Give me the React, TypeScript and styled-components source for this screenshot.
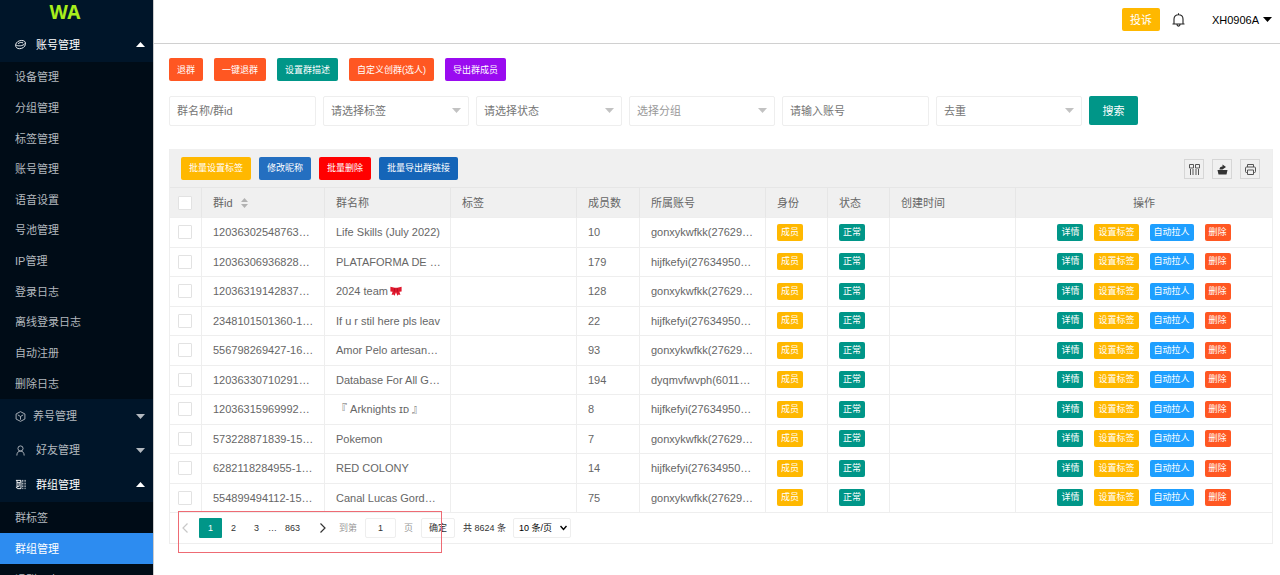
import React from 'react';
import styled, { createGlobalStyle } from 'styled-components';

const GlobalStyle = createGlobalStyle`
  *, *::before, *::after { box-sizing: border-box; }
  body {
    margin: 0;
    background: #fff;
    color: #666;
    font-family: "Liberation Sans", "Noto Sans CJK SC", sans-serif;
    font-size: 11px;
    line-height: 16px;
  }
  button, input, select { font: inherit; margin: 0; }
  ul { list-style: none; margin: 0; padding: 0; }
  a { color: inherit; text-decoration: none; }
`;

const Layout = styled.div`
  display: flex;
  height: 100vh;
  overflow: hidden;
`;

const Sidebar = styled.nav`
  flex: 0 0 153px;
  overflow: hidden;
  background: #001529;
  color: #b3b9bf;
`;

const Logo = styled.div`
  height: 27px;
  padding-right: 23px;
  font-family: "Noto Sans", sans-serif;
  font-size: 19px;
  font-weight: 700;
  line-height: 24px;
  text-align: center;
  color: #a8ee1c;
`;

const GroupButton = styled.button<{ $open?: boolean; $gap: number }>`
  display: flex;
  align-items: center;
  gap: ${p => p.$gap}px;
  width: 100%;
  height: ${p => (p.$open ? 35 : 34)}px;
  padding: 0 8px 0 15px;
  border: 0;
  background: none;
  color: ${p => (p.$open ? '#fff' : '#b3b9bf')};
  text-align: left;
  svg { flex: none; }
  span { flex: 1; }
`;

const SubMenu = styled.ul<{ $height?: number }>`
  display: grid;
  grid-auto-rows: ${p => (p.$height ? '1fr' : '31px')};
  height: ${p => (p.$height ? p.$height + 'px' : 'auto')};
  background: #000c17;
`;

const SubLink = styled.a<{ $active?: boolean }>`
  display: flex;
  align-items: center;
  height: 100%;
  padding-left: 15px;
  background: ${p => (p.$active ? '#2d8cf0' : 'transparent')};
  color: ${p => (p.$active ? '#fff' : '#b3b9bf')};
`;

const Main = styled.div`
  flex: 1;
  min-width: 0;
  border-left: 1px solid #ccc;
`;

const Header = styled.header`
  display: flex;
  align-items: center;
  justify-content: flex-end;
  height: 44px;
  padding: 0 8px 4px 0;
  border-bottom: 1px solid #d0d0d0;
`;

const Button = styled.button<{ $bg: string }>`
  height: 23px;
  padding: 0 8px;
  border: 0;
  border-radius: 2px;
  background: ${p => p.$bg};
  color: #fff;
  font-size: 9px;
  white-space: nowrap;
`;

const ComplainButton = styled(Button)`
  font-size: 11px;
`;

const BellButton = styled.button`
  display: flex;
  margin-left: 12px;
  padding: 0;
  border: 0;
  background: none;
`;

const UserButton = styled.button`
  display: flex;
  align-items: center;
  gap: 4px;
  margin-left: 27px;
  padding: 0;
  border: 0;
  background: none;
  color: #000;
`;

const Content = styled.main`
  padding: 14px 7px 0 15px;
`;

const Actions = styled.div`
  display: flex;
  gap: 11px;
`;

const Filters = styled.form`
  display: flex;
  gap: 7px;
  margin-top: 15px;
`;

const Field = styled.input`
  width: 147px;
  height: 30px;
  padding: 0 7px;
  border: 1px solid #eee;
  border-radius: 2px;
  color: #757575;
  outline: 0;
  &::placeholder { color: #757575; opacity: 1; }
`;

const SelectBox = styled.div`
  position: relative;
  svg {
    position: absolute;
    top: 12px;
    right: 8px;
    pointer-events: none;
  }
`;

const Select = styled.select<{ $light?: boolean }>`
  display: block;
  width: 146px;
  height: 30px;
  padding: 0 7px;
  border: 1px solid #eee;
  border-radius: 2px;
  background: #fff;
  color: ${p => (p.$light ? '#999' : '#757575')};
  appearance: none;
`;

const SearchButton = styled(Button)`
  width: 49px;
  height: 29px;
  font-size: 11px;
`;

const Panel = styled.section`
  margin-top: 23px;
  border: 1px solid #eee;
  border-top: 0;
`;

const Toolbar = styled.div`
  display: flex;
  align-items: center;
  gap: 8px;
  height: 39px;
  padding: 0 12px 0 11px;
  border-bottom: 1px solid #e6e6e6;
  background: #f0f0f0;
`;

const Tools = styled.div`
  display: flex;
  gap: 8px;
  margin-left: auto;
  padding-top: 2px;
`;

const ToolButton = styled.button`
  display: flex;
  align-items: center;
  justify-content: center;
  width: 20px;
  height: 20px;
  padding: 0;
  border: 1px solid #d6d6d6;
  background: none;
`;

const Table = styled.table`
  width: 100%;
  height: 325px;
  table-layout: fixed;
  border-collapse: separate;
  border-spacing: 0;
  th, td {
    padding: 0 11px;
    border-right: 1px solid #eee;
    border-bottom: 1px solid #eee;
    font-weight: 400;
    text-align: left;
    white-space: nowrap;
    overflow: hidden;
  }
  th { height: 30px; background: #f0f0f0; border-right-color: #e6e6e6; }
  th:first-child, td:first-child { padding: 0 0 0 8px; }
  th:last-child, td:last-child { border-right: 0; text-align: center; }
`;

const Check = styled.input`
  display: block;
  appearance: none;
  width: 14px;
  height: 14px;
  margin: 0;
  border: 1px solid #e2e2e2;
  border-radius: 1px;
  background: #fff;
`;

const SortLabel = styled.span`
  display: flex;
  align-items: center;
  gap: 8px;
`;

const Tag = styled.button<{ $bg: string }>`
  display: block;
  height: 17px;
  padding: 0 4px;
  border: 0;
  border-radius: 2px;
  background: ${p => p.$bg};
  color: #fff;
  font-size: 9px;
  line-height: 17px;
`;

const RowActions = styled.div`
  display: flex;
  justify-content: center;
  gap: 11px;
`;

const NameCell = styled.span`
  display: flex;
  align-items: center;
  gap: 2px;
  white-space: pre;
`;

const Pager = styled.div`
  position: relative;
  display: flex;
  align-items: center;
  height: 30px;
  color: #333;
  font-size: 9px;
`;

const PageButton = styled.button<{ $active?: boolean }>`
  display: flex;
  align-items: center;
  justify-content: center;
  min-width: 23px;
  height: 20px;
  padding: 0 8px;
  border: 0;
  border-radius: 1px;
  background: ${p => (p.$active ? '#009688' : 'none')};
  color: ${p => (p.$active ? '#fff' : '#333')};
`;

const ArrowButton = styled(PageButton)`
  width: 29px;
`;

const JumpLabel = styled.label`
  display: flex;
  align-items: center;
  gap: 8px;
  margin-left: 2px;
  color: #999;
`;

const JumpInput = styled.input`
  width: 31px;
  height: 20px;
  padding: 0;
  border: 1px solid #eee;
  border-radius: 2px;
  color: #333;
  text-align: center;
`;

const ConfirmButton = styled.button`
  height: 20px;
  margin: 0 8px;
  padding: 0 7px;
  border: 1px solid #eee;
  border-radius: 2px;
  background: #fff;
  color: #333;
`;

const LimitBox = styled(SelectBox)`
  margin-left: 7px;
  svg { top: 7px; right: 4px; }
`;

const LimitSelect = styled(Select)`
  width: 58px;
  height: 20px;
  padding: 0 5px;
  color: #000;
`;

const Highlight = styled.div`
  position: absolute;
  top: -2px;
  left: 8px;
  width: 264px;
  height: 42px;
  border: 1px solid #ee6b74;
  pointer-events: none;
`;

const Caret = ({ up, color }: { up?: boolean; color: string }) => (
  <svg width="9" height="5" viewBox="0 0 9 5" aria-hidden="true">
    <path d={up ? 'M0 5L4.5 0L9 5Z' : 'M0 0H9L4.5 5Z'} fill={color} />
  </svg>
);

const Icon = ({ children }: { children: React.ReactNode }) => (
  <svg width="11" height="11" viewBox="0 0 12 12" fill="none" stroke="currentColor" strokeWidth="1" aria-hidden="true">
    {children}
  </svg>
);

const AccountIcon = () => (
  <Icon>
    <path d="M.7 6.2C1.2 3.6 4 1.6 7.2 1.6C9.8 1.6 11.6 2.8 11.3 4.6V6C11 8.6 8 10.6 4.8 10.6C2.2 10.6 .5 9 .7 6.2ZM.9 6.2C2.5 8.2 8.8 8 11.3 4.6M3.4 5.2C4.5 3.8 7 3.4 8.8 4.2" />
  </Icon>
);
const CubeIcon = () => (
  <Icon>
    <path d="M6 .7L10.8 3.2V8.8L6 11.3L1.2 8.8V3.2ZM3 4.2L6 6L9 4.2M6 6V9.5" />
  </Icon>
);
const UserIcon = () => (
  <Icon>
    <circle cx="6" cy="3.8" r="2.8" />
    <path d="M2 11.5C2 8.5 3.5 6.6 6 6.6S10 8.5 10 11.5" />
  </Icon>
);
const GroupIcon = () => (
  <Icon>
    <path d="M1 1.5H6.5V10.5H3L1 9M2.2 1.5V9.5M2.2 4H4.5V8H2.2M6.5 3L4.5 4" />
    <path d="M8.5 1V11M11 1V11" strokeDasharray="2 1" />
  </Icon>
);

const BowIcon = () => (
  <svg width="12" height="10" viewBox="0 0 12 10" role="img" aria-label="蝴蝶结">
    <path d="M.4 .8L4.8 1.8H7.2L11.6 .8V5.6L9.4 5.8L10.4 9L8.6 8.6L7.4 9.8L6 6.2L4.6 9.8L3.4 8.6L1.6 9L2.6 5.8L.4 5.6Z" fill="#e0182d" />
    <path d="M4.6 2.2V5.6M7.4 2.2V5.6" stroke="#a30d22" strokeWidth=".7" />
  </svg>
);

const accountItems = ['设备管理', '分组管理', '标签管理', '账号管理', '语音设置', '号池管理', 'IP管理', '登录日志', '离线登录日志', '自动注册', '删除日志'];
const groupItems = ['群标签', '群组管理', '退群日志'];

const A = 'gonxykwfkk(27629…';
const B = 'hijfkefyi(27634950…';
const rows: { id: string; name: string; bow?: boolean; count: number; account: string }[] = [
  { id: '12036302548763…', name: 'Life Skills (July 2022)', count: 10, account: A },
  { id: '12036306936828…', name: 'PLATAFORMA DE …', count: 179, account: B },
  { id: '12036319142837…', name: '2024 team', bow: true, count: 128, account: A },
  { id: '2348101501360-1…', name: 'If u r stil here pls leav', count: 22, account: B },
  { id: '556798269427-16…', name: 'Amor Pelo artesan…', count: 93, account: A },
  { id: '12036330710291…', name: 'Database For All G…', count: 194, account: 'dyqmvfwvph(6011…' },
  { id: '12036315969992…', name: '『 Arknights ɪᴅ 』', count: 8, account: B },
  { id: '573228871839-15…', name: 'Pokemon', count: 7, account: A },
  { id: '6282118284955-1…', name: 'RED COLONY', count: 14, account: B },
  { id: '554899494112-15…', name: 'Canal Lucas Gord…', count: 75, account: A },
];
const columnWidths = [32, 123, 126, 126, 63, 126, 62, 62, 126];

const FilterSelect = ({ label, light }: { label: string; light?: boolean }) => (
  <SelectBox>
    <Select aria-label={label} $light={light}>
      <option>{label}</option>
    </Select>
    <Caret color="#c2c2c2" />
  </SelectBox>
);

const MenuGroup = ({ icon, label, open, gap = 10 }: { icon: React.ReactNode; label: string; open?: boolean; gap?: number }) => (
  <GroupButton $open={open} $gap={gap} aria-expanded={!!open}>
    {icon}
    <span>{label}</span>
    <Caret up={open} color={open ? '#fff' : '#b3b9bf'} />
  </GroupButton>
);

export default function App() {
  return (
    <Layout>
      <GlobalStyle />
      <Sidebar>
        <Logo>WA</Logo>
        <MenuGroup icon={<AccountIcon />} label="账号管理" open />
        <SubMenu $height={337}>
          {accountItems.map(t => (
            <li key={t}><SubLink href="#">{t}</SubLink></li>
          ))}
        </SubMenu>
        <MenuGroup icon={<CubeIcon />} label="养号管理" gap={7} />
        <MenuGroup icon={<UserIcon />} label="好友管理" />
        <MenuGroup icon={<GroupIcon />} label="群组管理" open />
        <SubMenu>
          {groupItems.map(t => (
            <li key={t}><SubLink href="#" $active={t === '群组管理'}>{t}</SubLink></li>
          ))}
        </SubMenu>
      </Sidebar>
      <Main>
        <Header>
          <ComplainButton $bg="#ffb800">投诉</ComplainButton>
          <BellButton aria-label="通知">
            <svg width="13" height="14" viewBox="0 0 13 14" fill="none" stroke="#222" strokeWidth="1.1">
              <path d="M.5 11H12.5M2 11V6C2 3.2 3.8 1.7 6.5 1.7S11 3.2 11 6V11M6.5 .3V1.7M5 11.5C5 13.6 8 13.6 8 11.5" />
            </svg>
          </BellButton>
          <UserButton>XH0906A<Caret color="#000" /></UserButton>
        </Header>
        <Content>
          <Actions>
            <Button $bg="#ff5722">退群</Button>
            <Button $bg="#ff5722">一键退群</Button>
            <Button $bg="#009688">设置群描述</Button>
            <Button $bg="#ff5722">自定义创群(选人)</Button>
            <Button $bg="#9a0bf0">导出群成员</Button>
          </Actions>
          <Filters onSubmit={e => e.preventDefault()}>
            <Field placeholder="群名称/群id" aria-label="群名称/群id" />
            <FilterSelect label="请选择标签" />
            <FilterSelect label="请选择状态" />
            <FilterSelect label="选择分组" light />
            <Field placeholder="请输入账号" aria-label="请输入账号" />
            <FilterSelect label="去重" />
            <SearchButton $bg="#009688">搜索</SearchButton>
          </Filters>
          <Panel>
            <Toolbar>
              <Button $bg="#ffb800">批量设置标签</Button>
              <Button $bg="#246fc0">修改昵称</Button>
              <Button $bg="#ff0000">批量删除</Button>
              <Button $bg="#1565b8">批量导出群链接</Button>
              <Tools>
                <ToolButton aria-label="筛选列">
                  <svg width="11" height="11" viewBox="0 0 11 11" fill="none" stroke="#555">
                    <path d="M.5 .5H4.5V4H.5ZM6.5 .5H10.5V4H6.5ZM1.5 5V11M4 5V11M7 5V11M9.5 5V11" />
                  </svg>
                </ToolButton>
                <ToolButton aria-label="导出">
                  <svg width="11" height="11" viewBox="0 0 11 11" fill="#333">
                    <path d="M.5 6H10.5L9.5 10.5H1.5ZM2.5 5.5C2.5 3.5 3.5 2.5 5.5 2.5V.5L9 3L5.5 5.5Z" />
                  </svg>
                </ToolButton>
                <ToolButton aria-label="打印">
                  <svg width="11" height="11" viewBox="0 0 11 11" fill="none" stroke="#555">
                    <path d="M2.5 3V.5H8.5V3M2.5 8.5H1.5Q.5 8.5 .5 7.5V4Q.5 3 1.5 3H9.5Q10.5 3 10.5 4V7.5Q10.5 8.5 9.5 8.5H8.5M2.5 6H8.5V10.5H2.5Z" />
                  </svg>
                </ToolButton>
              </Tools>
            </Toolbar>
            <Table>
              <colgroup>
                {columnWidths.map((w, i) => <col key={i} width={w} />)}
                <col />
              </colgroup>
              <thead>
                <tr>
                  <th><Check type="checkbox" aria-label="全选" /></th>
                  <th>
                    <SortLabel>
                      群id
                      <svg width="7" height="10" viewBox="0 0 7 10" fill="#b2b2b2" aria-hidden="true">
                        <path d="M0 4L3.5 0L7 4ZM0 6H7L3.5 10Z" />
                      </svg>
                    </SortLabel>
                  </th>
                  <th>群名称</th>
                  <th>标签</th>
                  <th>成员数</th>
                  <th>所属账号</th>
                  <th>身份</th>
                  <th>状态</th>
                  <th>创建时间</th>
                  <th>操作</th>
                </tr>
              </thead>
              <tbody>
                {rows.map(r => (
                  <tr key={r.id}>
                    <td><Check type="checkbox" aria-label={r.id} /></td>
                    <td>{r.id}</td>
                    <td><NameCell>{r.name}{r.bow && <BowIcon />}</NameCell></td>
                    <td />
                    <td>{r.count}</td>
                    <td>{r.account}</td>
                    <td><Tag $bg="#ffb800">成员</Tag></td>
                    <td><Tag $bg="#009688">正常</Tag></td>
                    <td />
                    <td>
                      <RowActions>
                        <Tag $bg="#009688">详情</Tag>
                        <Tag $bg="#ffb800">设置标签</Tag>
                        <Tag $bg="#1e9fff">自动拉人</Tag>
                        <Tag $bg="#ff5722">删除</Tag>
                      </RowActions>
                    </td>
                  </tr>
                ))}
              </tbody>
            </Table>
            <Pager>
              <ArrowButton aria-label="上一页">
                <svg width="6" height="10" viewBox="0 0 6 10" fill="none" stroke="#c8c8c8" strokeWidth="1.2"><path d="M5.5 .5L1 5L5.5 9.5" /></svg>
              </ArrowButton>
              <PageButton $active>1</PageButton>
              <PageButton>2</PageButton>
              <PageButton>3</PageButton>
              <span>…</span>
              <PageButton>863</PageButton>
              <ArrowButton aria-label="下一页">
                <svg width="6" height="10" viewBox="0 0 6 10" fill="none" stroke="#333" strokeWidth="1.2"><path d="M.5 .5L5 5L.5 9.5" /></svg>
              </ArrowButton>
              <JumpLabel>
                到第
                <JumpInput defaultValue="1" />
                页
              </JumpLabel>
              <ConfirmButton>确定</ConfirmButton>
              <span>共 8624 条</span>
              <LimitBox>
                <LimitSelect aria-label="每页条数"><option>10 条/页</option></LimitSelect>
                <svg width="7" height="6" viewBox="0 0 7 6" fill="none" stroke="#000" strokeWidth="1.4"><path d="M.5 1L3.5 4.5L6.5 1" /></svg>
              </LimitBox>
              <Highlight />
            </Pager>
          </Panel>
        </Content>
      </Main>
    </Layout>
  );
}
